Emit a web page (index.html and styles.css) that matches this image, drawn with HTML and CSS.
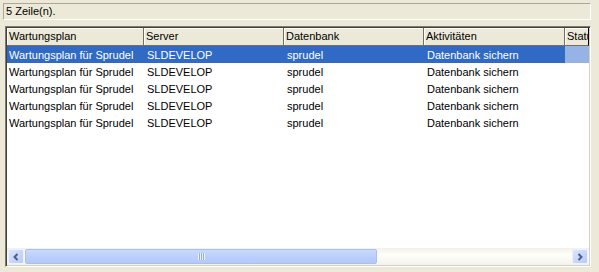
FILE: index.html
```html
<!DOCTYPE html>
<html>
<head>
<meta charset="utf-8">
<link rel="stylesheet" href="styles.css">
</head>
<body>
<div class="status">5 Zeile(n).</div>
<div class="grid">
  <div class="head row">
    <div class="hc">Wartungsplan</div>
    <div class="hc">Server</div>
    <div class="hc">Datenbank</div>
    <div class="hc">Aktivitäten</div>
    <div class="hc last">Statu</div>
  </div>
  <div class="body">
    <div class="row sel">
      <div class="c">Wartungsplan für Sprudel</div><div class="c">SLDEVELOP</div><div class="c">sprudel</div><div class="c">Datenbank sichern</div><div class="c x"></div>
    </div>
    <div class="row">
      <div class="c">Wartungsplan für Sprudel</div><div class="c">SLDEVELOP</div><div class="c">sprudel</div><div class="c">Datenbank sichern</div><div class="c x"></div>
    </div>
    <div class="row">
      <div class="c">Wartungsplan für Sprudel</div><div class="c">SLDEVELOP</div><div class="c">sprudel</div><div class="c">Datenbank sichern</div><div class="c x"></div>
    </div>
    <div class="row">
      <div class="c">Wartungsplan für Sprudel</div><div class="c">SLDEVELOP</div><div class="c">sprudel</div><div class="c">Datenbank sichern</div><div class="c x"></div>
    </div>
    <div class="row">
      <div class="c">Wartungsplan für Sprudel</div><div class="c">SLDEVELOP</div><div class="c">sprudel</div><div class="c">Datenbank sichern</div><div class="c x"></div>
    </div>
  </div>
  <div class="hscroll">
    <div class="btn"><svg width="8" height="8" viewBox="0 0 8 8"><path d="M5.5 1 L2.5 4 L5.5 7" fill="none" stroke="#4d6185" stroke-width="2"/></svg></div>
    <div class="track">
      <div class="thumb"><span class="grip"></span></div>
    </div>
    <div class="btn"><svg width="8" height="8" viewBox="0 0 8 8"><path d="M2.5 1 L5.5 4 L2.5 7" fill="none" stroke="#4d6185" stroke-width="2"/></svg></div>
  </div>
</div>
</body>
</html>
```
FILE: styles.css
```css
html, body {
  margin: 0;
  padding: 0;
}
body {
  width: 599px;
  height: 272px;
  background: #ece9d8;
  font-family: "Liberation Sans", sans-serif;
  font-size: 11px;
  color: #000;
  overflow: hidden;
  display: flex;
  flex-direction: column;
}
.status {
  margin: 3px 8px 0 3px;
  height: 15px;
  line-height: 15px;
  padding-left: 2px;
  border-top: 1px solid #aca899;
  border-left: 1px solid #aca899;
  border-bottom: 1px solid #fff;
  border-right: 1px solid #fff;
}
.grid {
  margin: 6px 8px 0 5px;
  height: 237px;
  background: #fff;
  border-top: 1px solid #7f7c6c;
  border-left: 1px solid #7f7c6c;
  border-bottom: 1px solid #fff;
  border-right: 1px solid #fff;
  box-shadow: inset 1px 1px 0 #404040, inset -1px -1px 0 #d4d0c8;
  display: flex;
  flex-direction: column;
  padding: 1px;
}
.row {
  display: grid;
  grid-template-columns: 137px 140px 140px 141px 1fr;
  height: 17px;
  line-height: 18px;
  white-space: nowrap;
}
.head {
  background: #ece9d8;
  height: 18px;
}
.hc {
  padding-left: 2px;
  overflow: hidden;
  border-right: 1px solid #716f64;
  border-bottom: 1px solid #716f64;
  box-shadow: inset 1px 1px 0 #fff;
  line-height: 16px;
}
.hc.last {
  border-right: 1px solid #000;
}
.body {
  flex: 1;
}
.c {
  padding-left: 2px;
  overflow: hidden;
}
.row .c:nth-child(n+2) {
  padding-left: 3px;
}
.sel .c {
  background: #316ac5;
  color: #fff;
}
.sel .c.x {
  background: #97b3e6;
}
.hscroll {
  height: 17px;
  display: flex;
  background: linear-gradient(#f2f0e8, #fefefb 40%, #f4f2ea);
}
.btn {
  height: 15px;
  width: 16px;
  margin: 1px 0;
  border: 1px solid #eef2fd;
  border-radius: 2px;
  background: linear-gradient(135deg, #dbe5fd, #b6cbf8);
  display: flex;
  align-items: center;
  justify-content: center;
  box-sizing: border-box;
}
.btn:first-child { margin-left: 1px; }
.btn:last-child { margin-right: 1px; }
.track {
  flex: 1;
  display: flex;
}
.thumb {
  width: 352px;
  margin: 1px 0 1px 1px;
  box-sizing: border-box;
  border: 1px solid #a9bff0;
  border-radius: 2px;
  background: linear-gradient(#cbdafc, #bacffb 50%, #b3c9fa);
  display: flex;
  align-items: center;
  justify-content: center;
}
.grip {
  width: 7px;
  height: 7px;
  background: repeating-linear-gradient(90deg, #eef3fe 0 1px, #8faaea 1px 2px);
}
```
